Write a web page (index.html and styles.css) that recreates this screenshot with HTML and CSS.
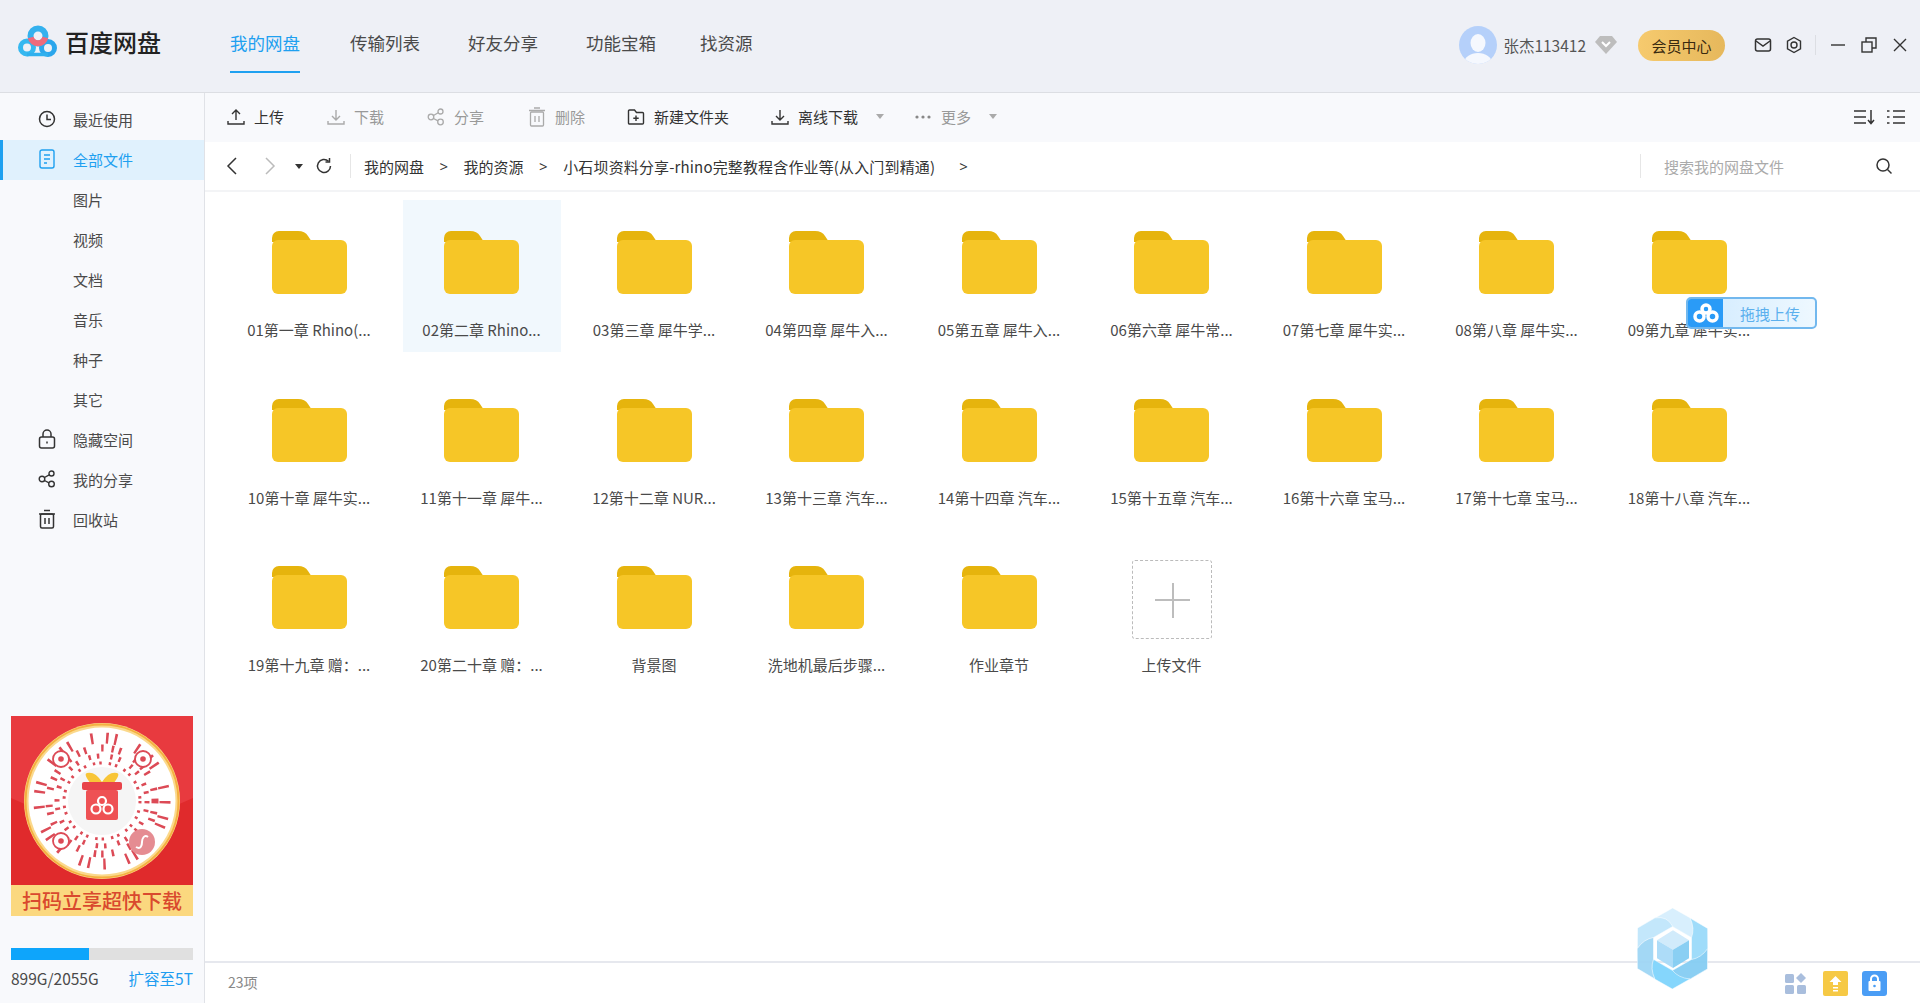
FILE: index.html
```html
<!DOCTYPE html>
<html lang="zh-CN">
  <head>
    <meta charset="utf-8" />
    <title>百度网盘</title>
    <link rel="stylesheet" href="styles.css">
  </head>
  <body>
    <svg class="defs" width="0" height="0">
      <symbol id="folder" viewBox="0 0 75 63">
        <path d="M0 26V7a7 7 0 0 1 7-7h19q7 0 10 5l4 6H0z" fill="#e6b40d" />
        <rect y="9" width="75" height="54" rx="6" fill="#f6c627" />
      </symbol>
      <symbol id="blade" viewBox="112 85 213 243" overflow="visible">
        <path d="M166 115L219 85L272 115Q296 145 276 174L219 141Q200 118 166 115Z" stroke="#fff" stroke-width="1.500" />
      </symbol>
    </svg>

    <div class="app">
      <header class="header">
        <div class="logo">
          <svg width="39" height="33" viewBox="0 0 39 33" fill="none">
            <circle cx="9" cy="22.500" r="6.500" stroke="#35b8f0" stroke-width="5" />
            <circle cx="30" cy="23" r="6.500" stroke="#2ba6ec" stroke-width="5" />
            <path d="M9 29.500h21" stroke="#2fb0ee" stroke-width="3.500" />
            <circle cx="20" cy="11" r="7.500" stroke="#34b1ee" stroke-width="6" />
            <path d="M12.700 12.500a7.500 7.500 0 0 0 14.600 0" stroke="#ee6a7c" stroke-width="6" />
          </svg>
          <span>百度网盘</span>
        </div>
        <nav class="nav">
          <a class="active">我的网盘</a>
          <a>传输列表</a>
          <a>好友分享</a>
          <a>功能宝箱</a>
          <a class="last">找资源</a>
        </nav>
        <div class="user">
          <svg class="avatar" width="38" height="38" viewBox="0 0 38 38">
            <defs><clipPath id="av"><circle cx="19" cy="19" r="19" /></clipPath></defs>
            <circle cx="19" cy="19" r="19" fill="#b5d0fa" />
            <g clip-path="url(#av)" fill="#f5f8fe">
              <ellipse cx="19" cy="17" rx="7.500" ry="9" />
              <ellipse cx="19" cy="37" rx="14" ry="10" />
            </g>
          </svg>
          <span class="username">张杰113412</span>
          <svg class="diamond" width="22" height="18" viewBox="0 0 22 18">
            <path d="M5 0h12l5 6-11 12L0 6z" fill="#bdbdbd" />
            <path d="M7 6l4 4 4-4" fill="none" stroke="#fff" stroke-width="2" />
          </svg>
          <a class="vip">会员中心</a>
        </div>
        <div class="win-tools">
          <svg width="18" height="18" viewBox="0 0 18 18" fill="none" stroke="#333" stroke-width="1.500">
            <rect x="1.500" y="3" width="15" height="12" rx="2" />
            <path d="M2 5l7 5 7-5" />
          </svg>
          <svg width="18" height="18" viewBox="0 0 18 18" fill="none" stroke="#333" stroke-width="1.400">
            <path d="M9 1.500l6.500 3.700v7.600L9 16.500l-6.500-3.700V5.200z" />
            <circle cx="9" cy="9" r="3" />
          </svg>
          <i class="win-sep"></i>
          <svg width="16" height="16" viewBox="0 0 16 16" stroke="#333" stroke-width="1.400"><path d="M1 8h14" /></svg>
          <svg width="16" height="16" viewBox="0 0 16 16" fill="none" stroke="#333" stroke-width="1.400">
            <rect x="1" y="5" width="10" height="10" />
            <path d="M5 5V1h10v10h-4" />
          </svg>
          <svg width="16" height="16" viewBox="0 0 16 16" stroke="#333" stroke-width="1.400"><path d="M2 2l12 12M14 2L2 14" /></svg>
        </div>
      </header>

      <div class="body">
        <aside class="sidebar">
          <ul class="side-nav">
            <li>
              <svg width="18" height="18" viewBox="0 0 18 18" fill="none" stroke="#333" stroke-width="1.500">
                <circle cx="9" cy="9" r="7.500" /><path d="M9 4.500V9.500H13" />
              </svg>
              最近使用
            </li>
            <li class="active">
              <svg width="18" height="20" viewBox="0 0 18 20" fill="none" stroke="#1ea0f0" stroke-width="1.400">
                <rect x="2" y="1" width="14" height="18" rx="2" /><path d="M6 6h6M6 10h6M6 14h3" />
              </svg>
              全部文件
            </li>
            <li class="sub">图片</li>
            <li class="sub">视频</li>
            <li class="sub">文档</li>
            <li class="sub">音乐</li>
            <li class="sub">种子</li>
            <li class="sub">其它</li>
            <li>
              <svg width="18" height="20" viewBox="0 0 18 20" fill="none" stroke="#333" stroke-width="1.500">
                <rect x="1.500" y="8" width="15" height="11" rx="2" /><path d="M5 8V5a4 4 0 0 1 8 0v3" /><path d="M9 12.500v2" />
              </svg>
              隐藏空间
            </li>
            <li>
              <svg width="18" height="18" viewBox="0 0 18 18" fill="none" stroke="#333" stroke-width="1.400">
                <circle cx="4" cy="9" r="2.800" /><circle cx="13.500" cy="3.500" r="2.500" /><circle cx="13.500" cy="14" r="2.800" /><path d="M6.500 7.500l4.700-2.700M6.500 10.500l4.500 2.300" />
              </svg>
              我的分享
            </li>
            <li>
              <svg width="18" height="20" viewBox="0 0 18 20" fill="none" stroke="#333" stroke-width="1.500">
                <rect x="2.500" y="5" width="13" height="14" rx="1.500" /><path d="M1 5h16M6 1.500h6M7 9v6M11 9v6" />
              </svg>
              回收站
            </li>
          </ul>

          <div class="side-bottom">
            <div class="ad">
              <svg width="182" height="169" viewBox="0 0 182 169">
                <rect width="182" height="169" fill="#e02a2c" />
                <path d="M0 0h182v82Q91 125 0 82z" fill="#e83a3f" />
                <circle cx="91" cy="85" r="78" fill="#fbd98c" />
                <circle cx="91" cy="85" r="76.500" fill="none" stroke="#f4b040" stroke-width="2" />
                <circle cx="91" cy="85" r="73.500" fill="#fff" />
                <g fill="none" stroke="#dc4a56">
                  <circle cx="91" cy="85" r="63" stroke-width="11" stroke-dasharray="2.500 13 2.500 6 2.500 21" />
                  <circle cx="91" cy="85" r="53" stroke-width="7" stroke-dasharray="2.500 8 2.500 5 2.500 15" />
                  <circle cx="91" cy="85" r="45" stroke-width="5" stroke-dasharray="2.500 6 2.500 11" />
                  <circle cx="91" cy="85" r="38" stroke-width="3" stroke-dasharray="2.500 7 2.500 4" />
                </g>
                <circle cx="91" cy="85" r="34" fill="#f5f5f5" />
                <g fill="#fff" stroke="#dc4a56" stroke-width="1.800">
                  <circle cx="50" cy="43" r="8" />
                  <circle cx="132" cy="43" r="8" />
                  <circle cx="50" cy="125" r="8" />
                </g>
                <g fill="#dc4a56">
                  <circle cx="50" cy="43" r="2.800" />
                  <circle cx="132" cy="43" r="2.800" />
                  <circle cx="50" cy="125" r="2.800" />
                </g>
                <path d="M80 68q-8-10-4-11 8-2 15 9 7-11 15-9 4 1-4 11z" fill="#f8c537" />
                <rect x="71" y="66" width="40" height="8" rx="2" fill="#e8434a" />
                <rect x="75" y="74" width="32" height="30" rx="2" fill="#ee5154" />
                <g fill="none" stroke="#fff" stroke-width="2.200">
                  <circle cx="91" cy="85" r="4" /><circle cx="85" cy="93" r="4.500" /><circle cx="97" cy="93" r="4.500" />
                </g>
                <circle cx="131" cy="126" r="13" fill="#e58c92" />
                <path d="M125 131c5 3 6-2 6-5s2-8 6-5" fill="none" stroke="#fff" stroke-width="2" />
              </svg>
              <div class="ad-strip">扫码立享超快下载</div>
            </div>
            <div class="quota"><span></span></div>
            <div class="quota-text">
              <span>899G/2055G</span>
              <a>扩容至5T</a>
            </div>
          </div>
        </aside>

        <main class="main">
          <div class="toolbar">
            <a class="tool" style="--w:100px">
              <svg width="18" height="18" viewBox="0 0 18 18" fill="none" stroke="#333" stroke-width="1.400"><path d="M9 12V2M5 6l4-4 4 4M1 13v3h16v-3" /></svg>
              上传
            </a>
            <a class="tool off" style="--w:100px">
              <svg width="18" height="18" viewBox="0 0 18 18" fill="none" stroke="#aaa" stroke-width="1.400"><path d="M9 2v10M5 8l4 4 4-4M1 13v3h16v-3" /></svg>
              下载
            </a>
            <a class="tool off" style="--w:101px">
              <svg width="18" height="18" viewBox="0 0 18 18" fill="none" stroke="#aaa" stroke-width="1.300"><circle cx="4" cy="9" r="2.800" /><circle cx="13.500" cy="3.500" r="2.500" /><circle cx="13.500" cy="14" r="2.800" /><path d="M6.500 7.500l4.700-2.700M6.500 10.500l4.500 2.300" /></svg>
              分享
            </a>
            <a class="tool off" style="--w:99px">
              <svg width="18" height="20" viewBox="0 0 18 20" fill="none" stroke="#aaa" stroke-width="1.300"><rect x="2.500" y="5" width="13" height="14" rx="1" /><path d="M1 3.500h16M6 1h6M7 9v6M11 9v6" /></svg>
              删除
            </a>
            <a class="tool" style="--w:144px">
              <svg width="18" height="18" viewBox="0 0 18 18" fill="none" stroke="#333" stroke-width="1.400"><path d="M1.500 3a1 1 0 0 1 1-1h5l2 2.500h6a1 1 0 0 1 1 1V15a1 1 0 0 1-1 1h-13a1 1 0 0 1-1-1zM9 7.500v5.500M6.300 10.200h5.400" /></svg>
              新建文件夹
            </a>
            <a class="tool" style="--w:143px">
              <svg width="18" height="18" viewBox="0 0 18 18" fill="none" stroke="#333" stroke-width="1.400"><path d="M9 2v10M5 8l4 4 4-4M1 13v3h16v-3" /></svg>
              离线下载
              <i class="caret"></i>
            </a>
            <a class="tool off">
              <svg width="18" height="18" viewBox="0 0 18 18" fill="#888"><circle cx="3" cy="9" r="1.600" /><circle cx="9" cy="9" r="1.600" /><circle cx="15" cy="9" r="1.600" /></svg>
              更多
              <i class="caret"></i>
            </a>
            <div class="tool-right">
              <svg width="22" height="18" viewBox="0 0 22 18" fill="none" stroke="#333" stroke-width="1.500"><path d="M1 3h12M1 9h12M1 15h12M18 2v13M15 12l3 3.500 3-3.500" /></svg>
              <svg width="18" height="18" viewBox="0 0 18 18" fill="none" stroke="#333" stroke-width="1.500"><path d="M6 3h12M6 9h12M6 15h12M0 3h2.500M0 9h2.500M0 15h2.500" /></svg>
            </div>
          </div>

          <div class="crumbs">
            <div class="crumb-nav">
              <svg width="12" height="18" viewBox="0 0 12 18" fill="none" stroke="#333" stroke-width="1.500"><path d="M10 1L2 9l8 8" /></svg>
              <svg class="fwd" width="12" height="18" viewBox="0 0 12 18" fill="none" stroke="#bbb" stroke-width="1.500"><path d="M2 1l8 8-8 8" /></svg>
              <i class="caret dark"></i>
              <svg class="refresh" width="18" height="18" viewBox="0 0 18 18" fill="none" stroke="#333" stroke-width="1.500"><path d="M15.500 9a6.500 6.500 0 1 1-2-4.700" /><path d="M14.500 1v4h-4" /></svg>
            </div>
            <div class="path">
              <a>我的网盘</a><b>&gt;</b><a>我的资源</a><b>&gt;</b><a class="long">小石坝资料分享-rhino完整教程含作业等(从入门到精通)</a><b class="end">&gt;</b>
            </div>
            <div class="search">
              <span>搜索我的网盘文件</span>
              <svg width="18" height="18" viewBox="0 0 18 18" fill="none" stroke="#333" stroke-width="1.500"><circle cx="8" cy="8" r="6" /><path d="M12.500 12.500l4 4" /></svg>
            </div>
          </div>

          <div class="files">
            <div class="tile"><svg><use href="#folder" /></svg><p>01第一章 Rhino(...</p></div>
            <div class="tile hover"><svg><use href="#folder" /></svg><p>02第二章 Rhino...</p></div>
            <div class="tile"><svg><use href="#folder" /></svg><p>03第三章 犀牛学...</p></div>
            <div class="tile"><svg><use href="#folder" /></svg><p>04第四章 犀牛入...</p></div>
            <div class="tile"><svg><use href="#folder" /></svg><p>05第五章 犀牛入...</p></div>
            <div class="tile"><svg><use href="#folder" /></svg><p>06第六章 犀牛常...</p></div>
            <div class="tile"><svg><use href="#folder" /></svg><p>07第七章 犀牛实...</p></div>
            <div class="tile"><svg><use href="#folder" /></svg><p>08第八章 犀牛实...</p></div>
            <div class="tile"><svg><use href="#folder" /></svg><p>09第九章 犀牛实...</p></div>
            <div class="tile"><svg><use href="#folder" /></svg><p>10第十章 犀牛实...</p></div>
            <div class="tile"><svg><use href="#folder" /></svg><p>11第十一章 犀牛...</p></div>
            <div class="tile"><svg><use href="#folder" /></svg><p>12第十二章 NUR...</p></div>
            <div class="tile"><svg><use href="#folder" /></svg><p>13第十三章 汽车...</p></div>
            <div class="tile"><svg><use href="#folder" /></svg><p>14第十四章 汽车...</p></div>
            <div class="tile"><svg><use href="#folder" /></svg><p>15第十五章 汽车...</p></div>
            <div class="tile"><svg><use href="#folder" /></svg><p>16第十六章 宝马...</p></div>
            <div class="tile"><svg><use href="#folder" /></svg><p>17第十七章 宝马...</p></div>
            <div class="tile"><svg><use href="#folder" /></svg><p>18第十八章 汽车...</p></div>
            <div class="tile"><svg><use href="#folder" /></svg><p>19第十九章 赠：...</p></div>
            <div class="tile"><svg><use href="#folder" /></svg><p>20第二十章 赠：...</p></div>
            <div class="tile"><svg><use href="#folder" /></svg><p>背景图</p></div>
            <div class="tile"><svg><use href="#folder" /></svg><p>洗地机最后步骤...</p></div>
            <div class="tile"><svg><use href="#folder" /></svg><p>作业章节</p></div>
            <div class="tile add"><div class="add-box"></div><p>上传文件</p></div>
          </div>

          <footer class="footer">
            <span>23项</span>
            <div class="foot-icons">
              <svg class="foot-grid" width="21" height="21" viewBox="0 0 21 21" fill="#a9bedd">
                <rect y="1" width="9" height="9" rx="1.500" /><path d="M16 0l5 5-5 5-5-5z" /><rect y="12" width="9" height="9" rx="1.500" /><rect x="12" y="12" width="9" height="9" rx="1.500" />
              </svg>
              <svg width="25" height="25" viewBox="0 0 25 25">
                <rect width="25" height="25" rx="2" fill="#f6c945" />
                <path d="M12.500 5l6 6h-3.500v3h-5v-3H6.500z" fill="#fff" />
                <path d="M10 16h5v1.500h-5zM10 19h5v1.500h-5z" fill="#fff" />
              </svg>
              <svg width="25" height="25" viewBox="0 0 25 25">
                <rect width="25" height="25" rx="3" fill="#4a9df5" />
                <rect x="6.500" y="10" width="12" height="10" rx="1" fill="#fff" />
                <path d="M9 10V8a3.500 3.500 0 0 1 7 0v2" fill="none" stroke="#fff" stroke-width="2" />
                <circle cx="12.500" cy="15" r="1.300" fill="#4a9df5" />
              </svg>
            </div>
          </footer>
        </main>
      </div>
    </div>

    <div class="drag-upload">
      <div class="drag-logo">
        <svg width="26" height="20" viewBox="0 0 26 20" fill="none" stroke="#fff" stroke-width="3.500">
          <circle cx="13" cy="6" r="4" /><circle cx="6.500" cy="13.500" r="4.500" /><circle cx="19.500" cy="13.500" r="4.500" />
        </svg>
      </div>
      <span>拖拽上传</span>
    </div>

    <svg class="hex-mark" width="71" height="81" viewBox="112 85 213 243">
      <use href="#blade" x="112" y="85" width="213" height="243" fill="#d6effd" />
      <use href="#blade" x="112" y="85" width="213" height="243" fill="#9adbfa" transform="rotate(60 218.500 206.500)" />
      <use href="#blade" x="112" y="85" width="213" height="243" fill="#85cdf3" transform="rotate(120 218.500 206.500)" />
      <use href="#blade" x="112" y="85" width="213" height="243" fill="#7fd4fc" transform="rotate(180 218.500 206.500)" />
      <use href="#blade" x="112" y="85" width="213" height="243" fill="#9fd6f5" transform="rotate(240 218.500 206.500)" />
      <use href="#blade" x="112" y="85" width="213" height="243" fill="#c0e6fb" transform="rotate(300 218.500 206.500)" />
      <path d="M220 152l48 30-48 28-48-28z" fill="#cfeafb" />
      <path d="M172 182l48 28v55l-48-29z" fill="#a9dbf8" />
      <path d="M268 182l-48 28v55l48-29z" fill="#84cdf3" />
    </svg>
  </body>
</html>
```

FILE: styles.css
```css
* {
  padding: 0;
  margin: 0;
  box-sizing: border-box;
  font-family: "Noto Sans CJK SC", "Open Sans", sans-serif;
}
html,
body {
  height: 100%;
  overflow: hidden;
  background-color: #ffffff;
  color: #4a4a4a;
  font-size: 15px;
}
ul {
  list-style: none;
}
.defs {
  position: absolute;
}
.app {
  height: 100vh;
  display: flex;
  flex-direction: column;
}

/* header */
.header {
  height: 93px;
  flex: none;
  display: flex;
  align-items: center;
  background-color: #eef0f6;
  border-bottom: 1px solid #dcdee3;
  padding-left: 18px;
}
.logo {
  display: flex;
  align-items: center;
  gap: 8px;
  width: 212px;
  margin-top: -9px;
}
.logo span {
  font-size: 24px;
  font-weight: 500;
  color: #222222;
  line-height: 32px;
}
.nav {
  display: flex;
  gap: 48px;
  align-self: stretch;
}
.nav a {
  font-size: 17.500px;
  line-height: 26px;
  padding-top: 30px;
  color: #4a4a4a;
  height: 73px;
}
.nav a.active {
  color: #1ea0f0;
  border-bottom: 2px solid #1ea0f0;
  margin-right: 2px;
}
.nav a.last {
  margin-left: -4px;
}
.user {
  margin-left: auto;
  display: flex;
  align-items: center;
  margin-top: -2px;
}
.username {
  margin-left: 6px;
  color: #555555;
  font-size: 15.500px;
}
.diamond {
  margin-left: 9px;
}
.vip {
  margin-left: 21px;
  width: 87px;
  height: 31px;
  border-radius: 16px;
  text-align: center;
  line-height: 31px;
  color: #3a2a10;
  background: linear-gradient(90deg, #f6ca6e, #e6b85c);
}
.win-tools {
  display: flex;
  align-items: center;
  gap: 13px;
  margin-left: 29px;
  padding-right: 12px;
  margin-top: -2px;
}
.win-tools svg:nth-of-type(3) {
  margin-left: 1px;
}
.win-tools svg:nth-of-type(n + 4) {
  margin-left: 2px;
}
.win-sep {
  width: 1px;
  height: 20px;
  margin-left: -1px;
  background-color: #dcdee3;
}

/* sidebar */
.body {
  flex: 1;
  display: flex;
  min-height: 0;
}
.sidebar {
  width: 205px;
  flex: none;
  display: flex;
  flex-direction: column;
  background-color: #f8f9fc;
  border-right: 1px solid #e0e2e7;
}
.side-nav {
  padding-top: 7px;
}
.side-nav li {
  height: 40px;
  display: flex;
  align-items: center;
  padding-left: 38px;
  padding-bottom: 2px;
  gap: 17px;
  color: #4a4a4a;
}
.side-nav li.active {
  color: #1ea0f0;
  background-color: #e0f1fd;
  border-left: 3px solid #1ea0f0;
  padding-left: 35px;
}
.side-nav li.sub {
  padding-left: 73px;
}
.side-bottom {
  margin-top: auto;
  padding: 0 11px 15px;
}
.ad {
  width: 182px;
}
.ad svg {
  display: block;
}
.ad-strip {
  height: 31px;
  line-height: 31px;
  text-align: center;
  font-size: 20px;
  font-weight: 500;
  color: #d9492e;
  background-color: #fbd87f;
}
.quota {
  height: 12px;
  margin-top: 32px;
  background-color: #e0e0e0;
}
.quota span {
  display: block;
  width: 78px;
  height: 100%;
  background-color: #0ea5fb;
}
.quota-text {
  display: flex;
  justify-content: space-between;
  align-items: center;
  margin-top: 8px;
  line-height: 20px;
  font-size: 15.500px;
}
.quota-text a {
  color: #1e9df0;
}

/* main */
.main {
  flex: 1;
  min-width: 0;
  display: flex;
  flex-direction: column;
}
.toolbar {
  height: 49px;
  flex: none;
  display: flex;
  align-items: center;
  padding: 0 0 2px 22px;
  background-color: #f8f9fc;
}
.tool {
  width: var(--w);
  display: flex;
  align-items: center;
  gap: 9px;
  color: #333333;
}
.tool.off {
  color: #999999;
}
.caret {
  width: 0;
  height: 0;
  margin-left: 9px;
  border-left: 4px solid transparent;
  border-right: 4px solid transparent;
  border-top: 5px solid #aaaaaa;
}
.caret.dark {
  margin-left: 0;
  border-top-color: #333333;
}
.tool-right {
  margin-left: auto;
  display: flex;
  align-items: center;
  gap: 12px;
  padding-right: 15px;
}
.crumbs {
  height: 50px;
  flex: none;
  display: flex;
  align-items: center;
  border-bottom: 2px solid #f3f4f6;
  padding-left: 21px;
}
.crumb-nav {
  display: flex;
  align-items: center;
  gap: 22px;
  width: 125px;
  height: 24px;
  border-right: 1px solid #e6e6e6;
}
.crumb-nav .fwd {
  margin-left: 4px;
}
.crumb-nav .caret {
  margin-right: -6px;
  margin-left: -3px;
}
.crumb-nav .refresh {
  margin-left: -4px;
}
.path {
  display: flex;
  align-items: center;
  margin-left: 13px;
  color: #333333;
}
.path a.long {
  letter-spacing: 0.150px;
}
.path b {
  font-weight: 400;
  margin: 0 15.500px;
  font-family: "Open Sans", sans-serif;
}
.path b.end {
  margin-left: 24px;
}
.search {
  margin-left: auto;
  width: 280px;
  height: 24px;
  display: flex;
  align-items: center;
  justify-content: space-between;
  padding: 0 27px 0 23px;
  border-left: 1px solid #e6e6e6;
  color: #aaaaaa;
}
.files {
  flex: 1;
  display: grid;
  grid-template-columns: repeat(9, 158px);
  grid-auto-rows: 152px;
  column-gap: 14.500px;
  row-gap: 15.700px;
  align-content: start;
  padding: 8px 0 0 25px;
}
.tile {
  padding-top: 31px;
  text-align: center;
}
.tile svg {
  display: block;
  width: 75px;
  height: 63px;
  margin: 0 auto;
}
.tile p {
  margin-top: 26px;
  line-height: 20px;
  color: #4a4a4a;
  white-space: nowrap;
}
.tile.hover {
  background-color: #f1f8fd;
}
.tile.add {
  padding-top: 25px;
}
.add-box {
  position: relative;
  width: 80px;
  height: 79px;
  margin: 0 auto;
  border: 1px dashed #bbbbbb;
  border-radius: 3px;
}
.add-box::before,
.add-box::after {
  content: "";
  position: absolute;
  background-color: #bdbdbd;
}
.add-box::before {
  left: 22px;
  top: 38px;
  width: 35px;
  height: 2px;
}
.add-box::after {
  left: 39px;
  top: 22px;
  width: 2px;
  height: 35px;
}
.tile.add p {
  margin-top: 16px;
}
.footer {
  height: 42px;
  flex: none;
  display: flex;
  align-items: center;
  justify-content: space-between;
  padding: 0 33px 2px 23px;
  border-top: 2px solid #e6e8ee;
  color: #888888;
  font-size: 14px;
}
.foot-icons {
  display: flex;
  align-items: center;
  gap: 14px;
  margin-top: 3px;
}
.foot-grid {
  margin-right: 3px;
}

/* floating widgets */
.drag-upload {
  position: absolute;
  left: 1686px;
  top: 297px;
  width: 131px;
  height: 32px;
  display: flex;
  align-items: center;
  border: 2px solid #72b8ee;
  border-radius: 5px;
  background: linear-gradient(90deg, #cfeaff, #eef8ff);
  overflow: hidden;
  color: #5cb0ee;
}
.drag-logo {
  width: 35px;
  height: 100%;
  display: grid;
  place-items: center;
  background-color: #2a9bf7;
}
.drag-upload span {
  margin-left: 17px;
}
.hex-mark {
  position: absolute;
  left: 1637px;
  top: 908px;
  opacity: 0.95;
}
```
